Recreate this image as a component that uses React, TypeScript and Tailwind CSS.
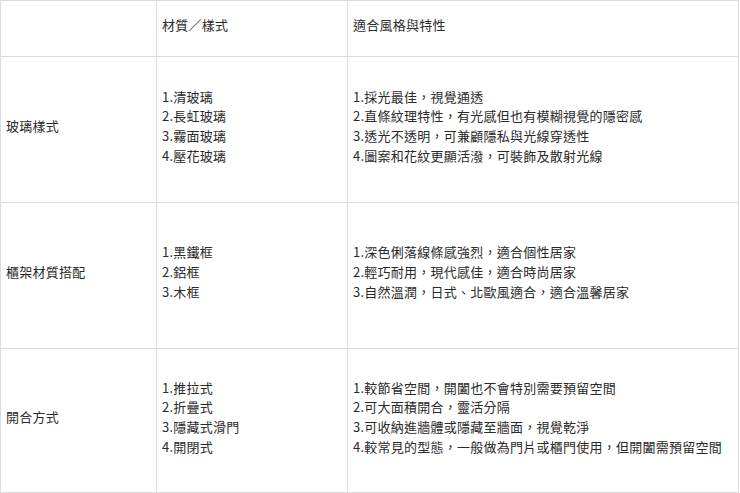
const rows = [
  {
    label: "玻璃樣式",
    items: ["1.清玻璃", "2.長虹玻璃", "3.霧面玻璃", "4.壓花玻璃"],
    notes: [
      "1.採光最佳，視覺通透",
      "2.直條紋理特性，有光感但也有模糊視覺的隱密感",
      "3.透光不透明，可兼顧隱私與光線穿透性",
      "4.圖案和花紋更顯活潑，可裝飾及散射光線",
    ],
  },
  {
    label: "櫃架材質搭配",
    items: ["1.黑鐵框", "2.鋁框", "3.木框"],
    notes: [
      "1.深色俐落線條感強烈，適合個性居家",
      "2.輕巧耐用，現代感佳，適合時尚居家",
      "3.自然溫潤，日式、北歐風適合，適合溫馨居家",
    ],
  },
  {
    label: "開合方式",
    items: ["1.推拉式", "2.折疊式", "3.隱藏式滑門", "4.開閉式"],
    notes: [
      "1.較節省空間，開闔也不會特別需要預留空間",
      "2.可大面積開合，靈活分隔",
      "3.可收納進牆體或隱藏至牆面，視覺乾淨",
      "4.較常見的型態，一般做為門片或櫃門使用，但開闔需預留空間",
    ],
  },
];

const cell = "border border-[#dcdcdc] pl-[5px] pr-[3px] pt-0 pb-[7px] align-middle";

export default function App() {
  return (
    <div className="w-[740px] h-[493px] bg-white overflow-hidden">
      <table
        className="w-[739px] border-collapse table-fixed text-[13px] leading-[19.7px] tracking-[0.25px] text-[#2a2a2a]"
        style={{ fontFamily: '"Noto Sans CJK TC", "Noto Sans", sans-serif' }}
      >
        <colgroup>
          <col className="w-[156px]" />
          <col className="w-[191px]" />
          <col />
        </colgroup>
        <thead>
          <tr className="h-[56px]">
            <th className={`${cell} font-normal text-left`}></th>
            <th className={`${cell} font-normal text-left`}>材質／樣式</th>
            <th className={`${cell} font-normal text-left`}>適合風格與特性</th>
          </tr>
        </thead>
        <tbody>
          {rows.map((r, i) => (
            <tr key={r.label} className={i === 2 ? "h-[144px]" : "h-[146px]"}>
              <td className={cell}>{r.label}</td>
              <td className={cell}>
                {r.items.map((t) => (
                  <div key={t}>{t}</div>
                ))}
              </td>
              <td className={cell}>
                {r.notes.map((t) => (
                  <div key={t}>{t}</div>
                ))}
              </td>
            </tr>
          ))}
        </tbody>
      </table>
    </div>
  );
}
